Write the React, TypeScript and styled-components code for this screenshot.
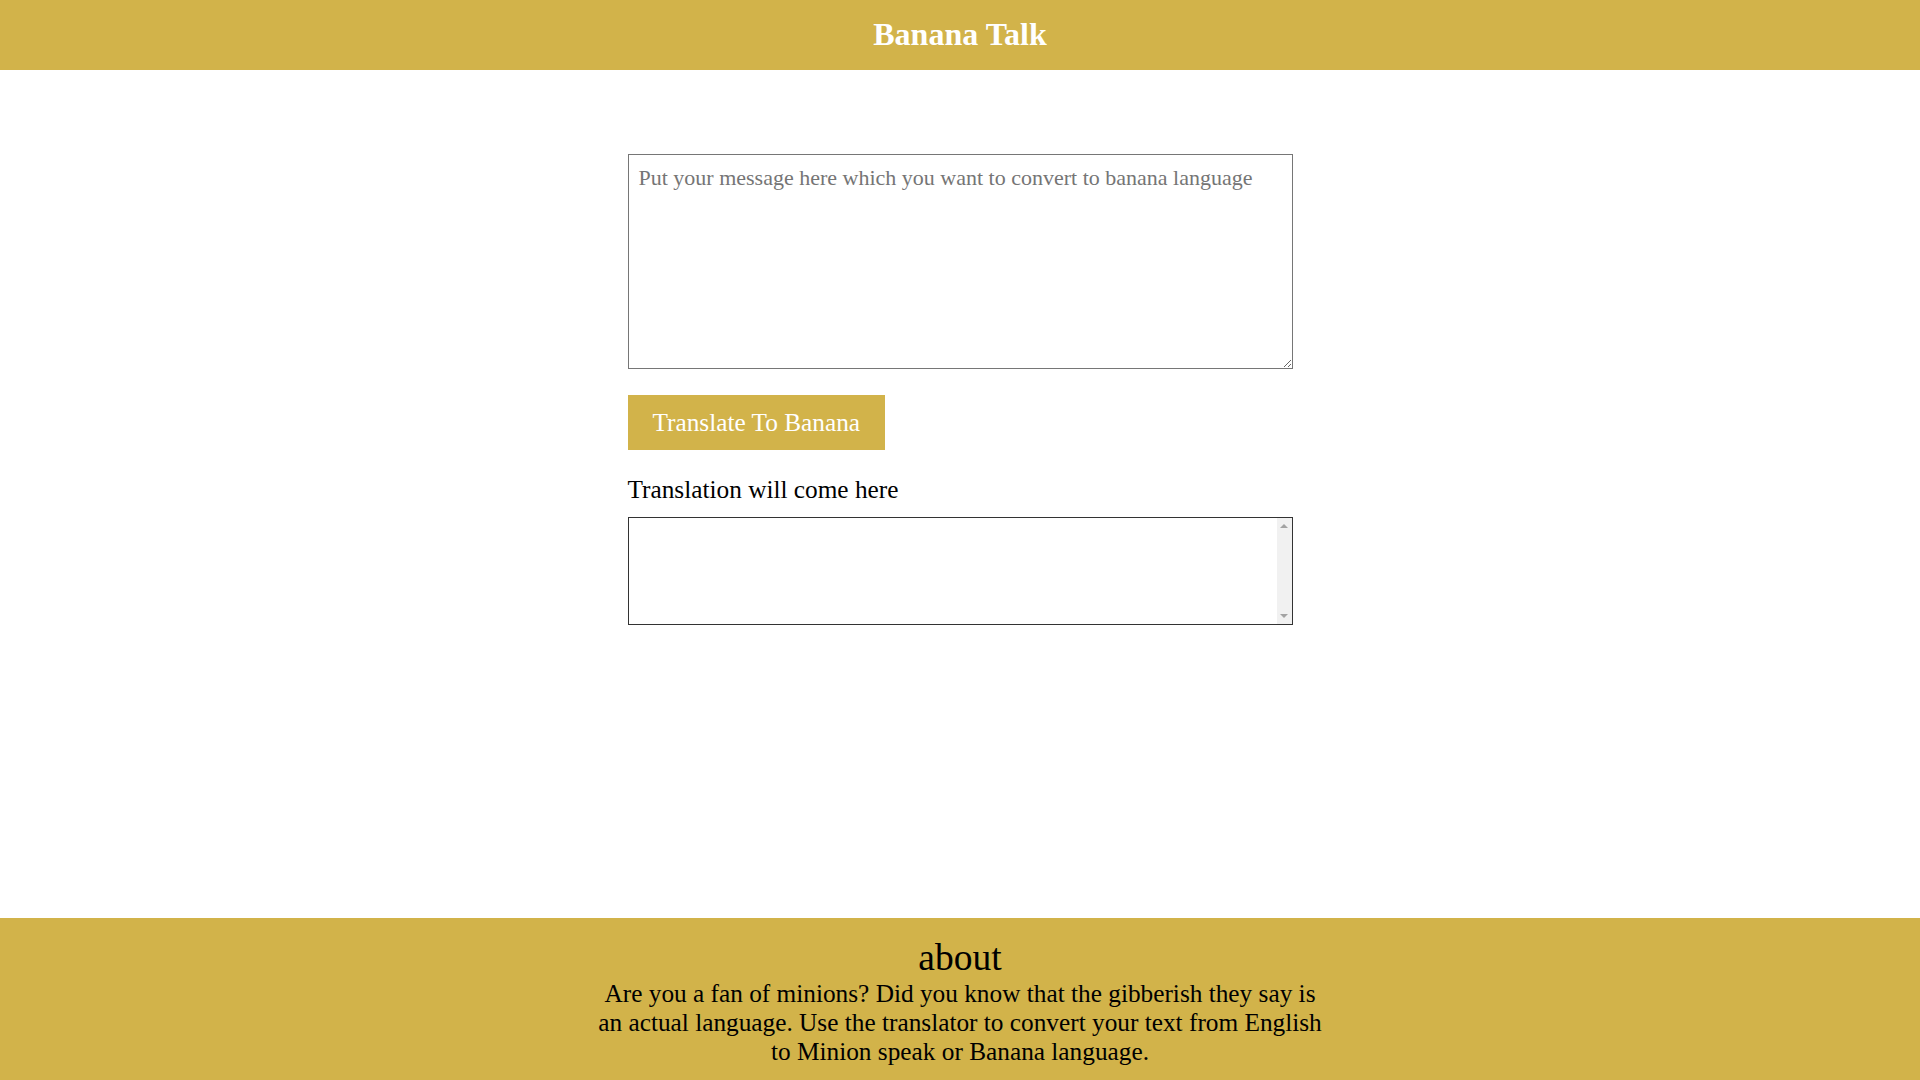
import React, { useState } from "react";
import styled, { createGlobalStyle } from "styled-components";

const GOLD = "#d2b34a";

const GlobalStyle = createGlobalStyle`
  html, body {
    margin: 0;
    padding: 0;
    background: #ffffff;
    font-family: "Liberation Serif", "Times New Roman", serif;
  }
  * { box-sizing: border-box; }
`;

const Page = styled.div`
  min-height: 100vh;
  display: flex;
  flex-direction: column;
`;

const Header = styled.header`
  height: 70px;
  padding-bottom: 2px;
  background: ${GOLD};
  display: flex;
  align-items: center;
  justify-content: center;
`;

const Title = styled.h1`
  margin: 0;
  color: #ffffff;
  font-size: 32px;
  font-weight: bold;
  font-family: "Liberation Serif", serif;
`;

const Main = styled.main`
  flex: 1;
  width: 665px;
  margin: 0 auto;
  padding-top: 84px;
  display: flex;
  flex-direction: column;
  align-items: flex-start;
`;

const Input = styled.textarea`
  display: block;
  width: 665px;
  height: 215px;
  padding: 10px;
  margin: 0;
  border: 1px solid #767676;
  border-radius: 0;
  font-family: "Liberation Serif", serif;
  font-size: 22px;
  color: #000;
  resize: both;
  &::placeholder {
    color: #757575;
  }
`;

const TranslateButton = styled.button`
  margin-top: 26px;
  padding: 13px 25px;
  background: ${GOLD};
  color: #ffffff;
  border: none;
  border-radius: 0;
  font-family: "Liberation Serif", serif;
  font-size: 25.3px;
  line-height: normal;
  cursor: pointer;
`;

const Label = styled.div`
  margin-top: 24.5px;
  font-size: 25.3px;
  color: #000;
`;

const Output = styled.div`
  margin-top: 13px;
  width: 665px;
  height: 108px;
  border: 1px solid #333333;
  display: flex;
  background: #ffffff;
`;

const OutputText = styled.div`
  flex: 1;
  font-size: 22px;
  padding: 4px 8px;
  overflow: hidden;
`;

const ScrollTrack = styled.div`
  width: 15px;
  background: #f1f1f1;
  display: flex;
  flex-direction: column;
  justify-content: space-between;
  align-items: center;
  padding: 6px 0;
`;

const Arrow = styled.span<{ $down?: boolean }>`
  width: 0;
  height: 0;
  border-left: 4px solid transparent;
  border-right: 4px solid transparent;
  ${(p) =>
    p.$down
      ? "border-top: 4px solid #a3a3a3;"
      : "border-bottom: 4px solid #a3a3a3;"}
`;

const Footer = styled.footer`
  background: ${GOLD};
  text-align: center;
  padding: 17.5px 0 14.5px;
`;

const FooterTitle = styled.h2`
  margin: 0;
  font-size: 37.5px;
  font-weight: normal;
  color: #000;
`;

const FooterText = styled.p`
  margin: 0 auto;
  max-width: 732px;
  font-size: 25.3px;
  color: #000;
`;

export default function App() {
  const [text, setText] = useState("");
  const [result, setResult] = useState("");
  return (
    <Page>
      <GlobalStyle />
      <Header>
        <Title>Banana Talk</Title>
      </Header>
      <Main>
        <Input
          value={text}
          onChange={(e) => setText(e.target.value)}
          placeholder="Put your message here which you want to convert to banana language"
        />
        <TranslateButton onClick={() => setResult(text)}>Translate To Banana</TranslateButton>
        <Label>Translation will come here</Label>
        <Output>
          <OutputText>{result}</OutputText>
          <ScrollTrack>
            <Arrow />
            <Arrow $down />
          </ScrollTrack>
        </Output>
      </Main>
      <Footer>
        <FooterTitle>about</FooterTitle>
        <FooterText>
          Are you a fan of minions? Did you know that the gibberish they say is an actual
          language. Use the translator to convert your text from English to Minion speak or
          Banana language.
        </FooterText>
      </Footer>
    </Page>
  );
}
